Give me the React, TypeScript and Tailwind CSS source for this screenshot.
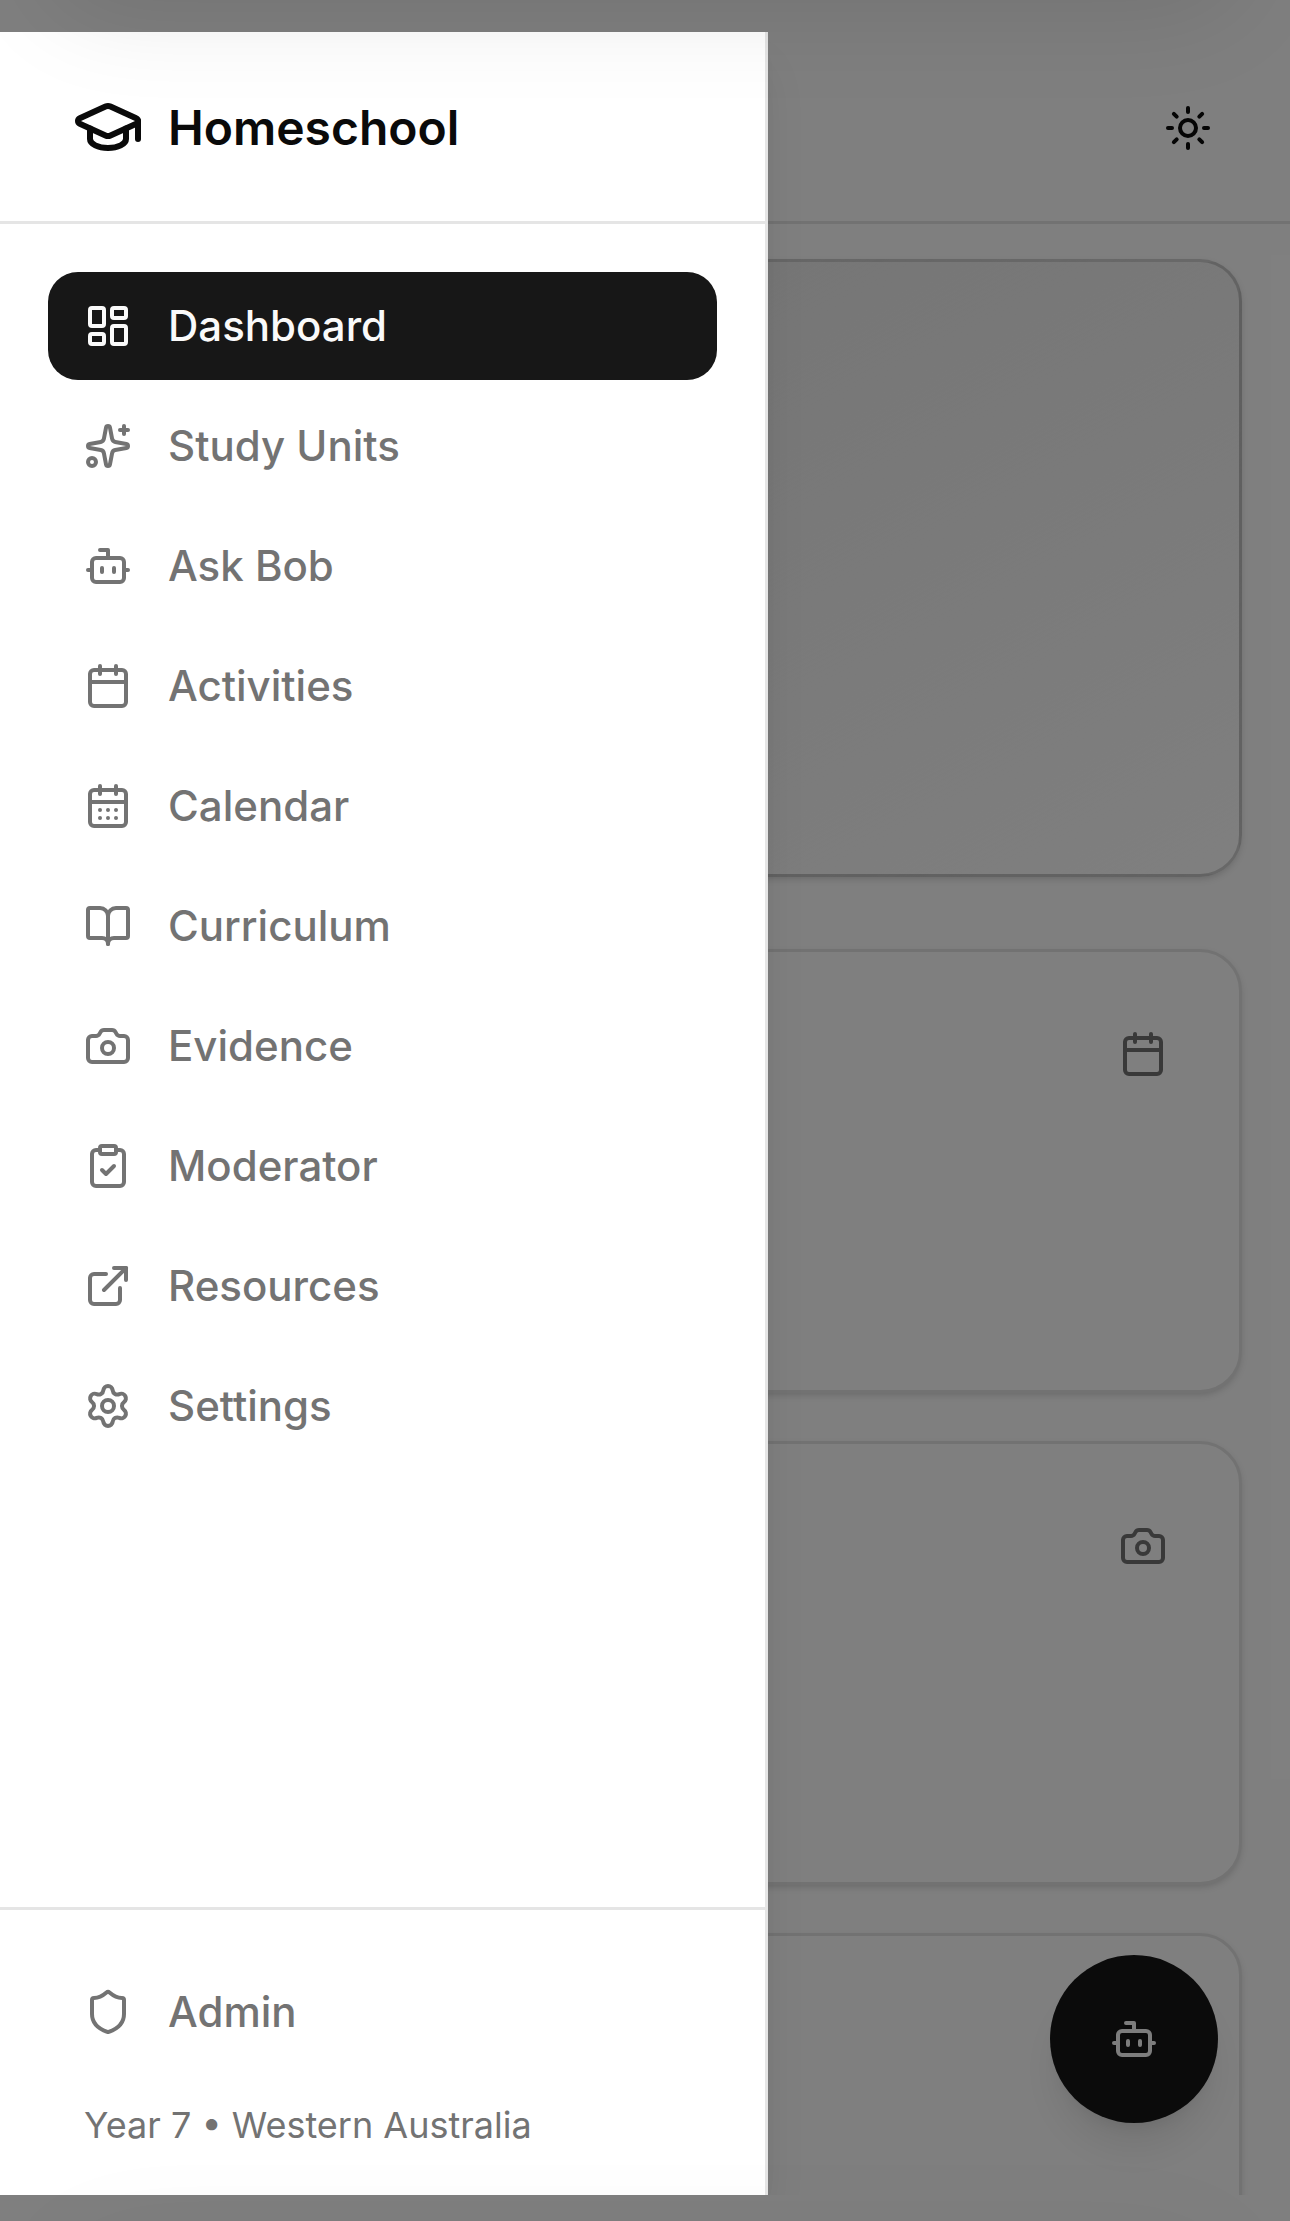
import {
  BookOpen,
  Bot,
  Calendar,
  CalendarDays,
  Camera,
  ClipboardCheck,
  ExternalLink,
  GraduationCap,
  LayoutDashboard,
  Settings,
  Shield,
  Sparkles,
  Sun,
} from 'lucide-react';
import type { LucideIcon } from 'lucide-react';

const navItems: { label: string; icon: LucideIcon }[] = [
  { label: 'Dashboard', icon: LayoutDashboard },
  { label: 'Study Units', icon: Sparkles },
  { label: 'Ask Bob', icon: Bot },
  { label: 'Activities', icon: Calendar },
  { label: 'Calendar', icon: CalendarDays },
  { label: 'Curriculum', icon: BookOpen },
  { label: 'Evidence', icon: Camera },
  { label: 'Moderator', icon: ClipboardCheck },
  { label: 'Resources', icon: ExternalLink },
  { label: 'Settings', icon: Settings },
];

const NavLink = ({ label, icon: Icon, active = false }: { label: string; icon: LucideIcon; active?: boolean }) => (
  <a
    href="#"
    className={`flex h-[108px] shrink-0 items-center gap-9 rounded-[30px] px-9 text-[42px] leading-[60px] font-medium ${
      active ? 'bg-[#171717] text-[#fafafa]' : 'text-[#737373]'
    }`}
  >
    <Icon className="size-12 shrink-0" />
    {label}
  </a>
);

const StatCard = ({ icon: Icon }: { icon?: LucideIcon }) => (
  <div className="h-[444px] shrink-0 rounded-[42px] border-[3px] border-[#e5e5e5] bg-white p-[72px] shadow-[0_3px_9px_rgba(0,0,0,0.1),0_3px_6px_-3px_rgba(0,0,0,0.1)]">
    <div className="flex h-[60px] items-center justify-end">
      {Icon && <Icon className="size-12 text-[#737373]" />}
    </div>
  </div>
);

const Sidebar = () => (
  <aside className="flex h-full w-[768px] flex-col border-r-[3px] border-[#e5e5e5] bg-white shadow-[0_30px_45px_-9px_rgba(0,0,0,0.1),0_12px_18px_-12px_rgba(0,0,0,0.1)]">
    <div className="flex h-48 shrink-0 items-center gap-6 border-b-[3px] border-[#e5e5e5] px-[72px] text-[#0a0a0a]">
      <GraduationCap className="size-[72px]" />
      <span className="pt-0.5 text-[48px] leading-[72px] font-semibold">Homeschool</span>
    </div>

    <nav className="flex flex-1 flex-col gap-3 p-12">
      {navItems.map((item, i) => (
        <NavLink key={item.label} label={item.label} icon={item.icon} active={i === 0} />
      ))}
    </nav>

    <div className="flex h-72 shrink-0 flex-col gap-[35px] border-t-[3px] border-[#e5e5e5] px-12 pt-12">
      <NavLink label="Admin" icon={Shield} />
      <p className="px-9 text-[36px] leading-[48px] text-[#737373]">Year 7 • Western Australia</p>
    </div>
  </aside>
);

export default function App() {
  return (
    <div className="relative h-[2221px] w-[1290px] overflow-hidden bg-white pt-8 font-['Inter',sans-serif]">
      {/* Page */}
      <div className="relative flex h-[2163px] flex-col overflow-hidden">
        <header className="flex h-48 shrink-0 items-center justify-end border-b-[3px] border-[#e5e5e5] px-[78px] pt-[3px] text-[#0a0a0a]">
          <Sun className="size-12" />
        </header>
        <main className="flex flex-col gap-12 px-12 pt-[35px]">
          <div className="mb-6 h-[618px] shrink-0 rounded-[42px] border-[3px] border-[#171717]/20 bg-linear-to-br from-[#171717]/10 to-white shadow-[0_3px_9px_rgba(0,0,0,0.1),0_3px_6px_-3px_rgba(0,0,0,0.1)]" />
          <StatCard icon={Calendar} />
          <StatCard icon={Camera} />
          <StatCard />
        </main>
        <button className="absolute right-[72px] bottom-[72px] flex size-[168px] items-center justify-center rounded-full bg-[#171717] text-[#fafafa] shadow-[0_30px_45px_-9px_rgba(0,0,0,0.1),0_12px_18px_-12px_rgba(0,0,0,0.1)]">
          <Bot className="size-12" />
        </button>
      </div>

      {/* Backdrop */}
      <div className="absolute inset-0 bg-black/50" />

      {/* Drawer */}
      <div className="absolute inset-x-0 top-8 bottom-[26px] overflow-hidden">
        <Sidebar />
      </div>

      {/* Soft shade from the browser bars */}
      <div className="pointer-events-none absolute inset-x-[48px] -top-[140px] h-[140px] rounded-[60px] shadow-[0_12px_100px_rgba(0,0,0,0.1)]" />
      <div className="pointer-events-none absolute inset-x-[60px] -bottom-[140px] h-[120px] rounded-[60px] shadow-[0_0_110px_rgba(0,0,0,0.05)]" />
    </div>
  );
}
